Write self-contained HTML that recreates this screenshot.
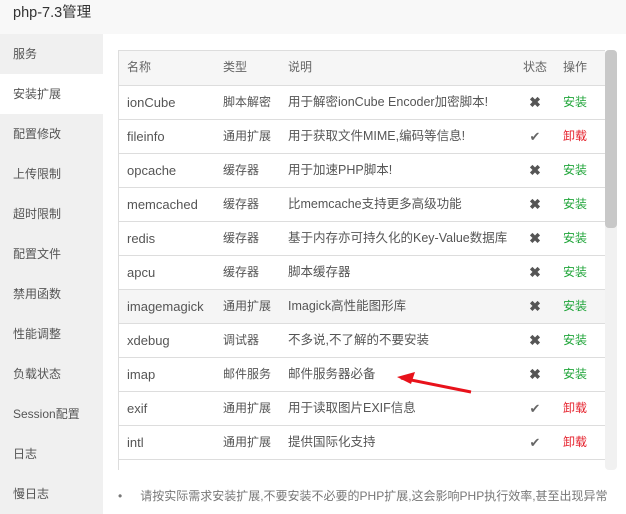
<!DOCTYPE html>
<html><head><meta charset="utf-8"><style>
*{margin:0;padding:0;box-sizing:border-box}
body{width:626px;height:514px;overflow:hidden;background:#fff;font-family:"Liberation Sans","Noto Sans CJK SC",sans-serif;font-size:12px;color:#555;position:relative}
.title{position:absolute;left:0;top:0;width:626px;height:34px;background:#f8f8f8;font-size:14.5px;color:#333;padding:0 0 0 13px;line-height:27px}
.side{position:absolute;left:0;top:34px;width:103px;height:480px;background:#f0f0f0}
.side div{height:40px;line-height:40px;padding-left:13px;color:#555;font-size:12px}
.side .on{background:#fff}
.tbl{position:absolute;left:118px;top:50px;width:487px;height:420px;border-left:1px solid #ddd;border-top:1px solid #ddd;overflow:hidden}
table{border-collapse:collapse;width:487px;table-layout:fixed}
td,th{height:34px;line-height:33px;border-bottom:1px solid #ddd;text-align:left;font-weight:normal;padding:0;white-space:nowrap;vertical-align:middle;font-size:12px;overflow:hidden}
td.l{font-size:13px}
td.d{font-size:12.5px}
th{background:#f6f6f6;color:#666}
.c1{padding-left:8px!important}
.c4{text-align:center!important}
.c5{padding-left:7px!important}
.hv td{background:#f5f5f5}
.x{color:#555;font-size:14px!important;font-weight:bold}
.ok{color:#666;font-size:13px!important}
.g{color:#20a53a}.r{color:#e5212c}
.sb{position:absolute;left:605px;top:50px;width:12px;height:178px;background:#c8c8c8;border-radius:4px}
.sbt{position:absolute;left:605px;top:50px;width:12px;height:420px;background:#f1f1f1;border-radius:4px}
.note{position:absolute;left:118px;top:487px;color:#777;font-size:12px}
</style></head><body>
<div class="title">php-7.3管理</div>
<div class="side">
<div>服务</div><div class="on">安装扩展</div><div>配置修改</div><div>上传限制</div><div>超时限制</div><div>配置文件</div><div>禁用函数</div><div>性能调整</div><div>负载状态</div><div>Session配置</div><div>日志</div><div>慢日志</div>
</div>
<div class="sbt"></div><div class="sb"></div>
<div class="tbl"><table>
<colgroup><col style="width:104px"><col style="width:65px"><col style="width:226px"><col style="width:42px"><col style="width:50px"></colgroup>
<tr><th class="c1">名称</th><th class="c2">类型</th><th>说明</th><th class="c4">状态</th><th class="c5">操作</th></tr>
<tr><td class="c1 l">ionCube</td><td class="c2">脚本解密</td><td class="d">用于解密ionCube Encoder加密脚本!</td><td class="c4 x">✖</td><td class="c5 g">安装</td></tr>
<tr><td class="c1 l">fileinfo</td><td class="c2">通用扩展</td><td class="d">用于获取文件MIME,编码等信息!</td><td class="c4 ok">✔</td><td class="c5 r">卸载</td></tr>
<tr><td class="c1 l">opcache</td><td class="c2">缓存器</td><td class="d">用于加速PHP脚本!</td><td class="c4 x">✖</td><td class="c5 g">安装</td></tr>
<tr><td class="c1 l">memcached</td><td class="c2">缓存器</td><td class="d">比memcache支持更多高级功能</td><td class="c4 x">✖</td><td class="c5 g">安装</td></tr>
<tr><td class="c1 l">redis</td><td class="c2">缓存器</td><td class="d">基于内存亦可持久化的Key-Value数据库</td><td class="c4 x">✖</td><td class="c5 g">安装</td></tr>
<tr><td class="c1 l">apcu</td><td class="c2">缓存器</td><td class="d">脚本缓存器</td><td class="c4 x">✖</td><td class="c5 g">安装</td></tr>
<tr class="hv"><td class="c1 l">imagemagick</td><td class="c2">通用扩展</td><td class="d">Imagick高性能图形库</td><td class="c4 x">✖</td><td class="c5 g">安装</td></tr>
<tr><td class="c1 l">xdebug</td><td class="c2">调试器</td><td class="d">不多说,不了解的不要安装</td><td class="c4 x">✖</td><td class="c5 g">安装</td></tr>
<tr><td class="c1 l">imap</td><td class="c2">邮件服务</td><td class="d">邮件服务器必备</td><td class="c4 x">✖</td><td class="c5 g">安装</td></tr>
<tr><td class="c1 l">exif</td><td class="c2">通用扩展</td><td class="d">用于读取图片EXIF信息</td><td class="c4 ok">✔</td><td class="c5 r">卸载</td></tr>
<tr><td class="c1 l">intl</td><td class="c2">通用扩展</td><td class="d">提供国际化支持</td><td class="c4 ok">✔</td><td class="c5 r">卸载</td></tr>
<tr><td class="c1"></td><td class="c2"></td><td></td><td class="c4"></td><td class="c5"></td></tr>
</table></div>
<svg style="position:absolute;left:395px;top:370px" width="80" height="25"><path d="M6 8 L76 22" stroke="#e8121b" stroke-width="3"/><path d="M2 7 L20 2 L16 14 Z" fill="#e8121b"/></svg>
<div class="note"><span style="margin-right:18px">•</span>请按实际需求安装扩展,不要安装不必要的PHP扩展,这会影响PHP执行效率,甚至出现异常</div>
</body></html>
